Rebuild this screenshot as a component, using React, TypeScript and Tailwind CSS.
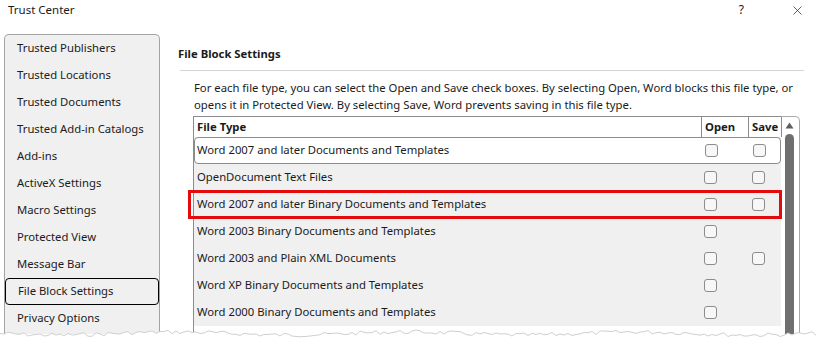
import { X } from "lucide-react";

const NAV_ITEMS = [
  "Trusted Publishers",
  "Trusted Locations",
  "Trusted Documents",
  "Trusted Add-in Catalogs",
  "Add-ins",
  "ActiveX Settings",
  "Macro Settings",
  "Protected View",
  "Message Bar",
  "File Block Settings",
  "Privacy Options",
];

type FileRow = { name: string; save: boolean };

const FILE_ROWS: FileRow[] = [
  { name: "Word 2007 and later Documents and Templates", save: true },
  { name: "OpenDocument Text Files", save: true },
  { name: "Word 2007 and later Binary Documents and Templates", save: true },
  { name: "Word 2003 Binary Documents and Templates", save: false },
  { name: "Word 2003 and Plain XML Documents", save: true },
  { name: "Word XP Binary Documents and Templates", save: false },
  { name: "Word 2000 Binary Documents and Templates", save: false },
];

const Checkbox = () => (
  <span className="block h-[13px] w-[13px] rounded-[3px] border border-[#8c8c8c] bg-[#f7f7f7]" />
);

// torn paper edge along the bottom of the screenshot
const tornEdge = () => {
  let seed = 7;
  const rand = () => {
    seed = (seed * 9301 + 49297) % 233280;
    return seed / 233280;
  };
  const pts: string[] = ["0,20"];
  for (let x = 0; x <= 816; x += 4) {
    const y = 6 + rand() * 4 + Math.sin(x / 37) * 1.5;
    pts.push(`${x},${y.toFixed(1)}`);
  }
  pts.push("816,20");
  return pts.join(" ");
};

export default function App() {
  const edge = tornEdge();

  return (
    <div className="relative h-[338px] w-[816px] overflow-hidden bg-white font-['Noto_Sans',sans-serif] text-[11.3px] text-[#1b1b1b]">
      <div className="flex h-[34px] items-start pt-[2px]">
        <span className="pl-[8px] text-[11.5px] leading-[16px]">Trust Center</span>
        <span className="ml-auto mr-[46px] text-[12px] leading-[16px]">?</span>
        <X className="mr-[11px] mt-[1px] h-[15px] w-[15px]" strokeWidth={1.1} />
      </div>

      <div className="flex">
        <div className="ml-[4px] h-[300px] w-[156px] shrink-0 whitespace-nowrap rounded-t-[5px] border border-b-0 border-[#a3a3a3] bg-[#f0f0f0]">
          {NAV_ITEMS.map((item) => (
            <div
              key={item}
              className={`flex h-[27px] items-center pl-[12px] ${
                item === "File Block Settings"
                  ? "rounded-[4px] border border-black pl-[11px]"
                  : ""
              }`}
            >
              {item}
            </div>
          ))}
        </div>

        <div className="ml-[18px] flex-1 pt-[10px]">
          <h2 className="h-[20px] font-bold leading-[20px]">File Block Settings</h2>
          <div className="ml-[2px] mr-[12px] mt-[6px] h-px bg-[#d4d4d4]" />
          <p className="mt-[8px] whitespace-nowrap pl-[16px] leading-[17px]">
            For each file type, you can select the Open and Save check boxes. By selecting Open, Word blocks this file type, or
            <br />
            opens it in Protected View. By selecting Save, Word prevents saving in this file type.
          </p>

          <div className="ml-[15px] mt-[3px] flex w-[607px]">
            <div className="w-[588px] border-l border-[#8c8c8c]">
              <div className="grid h-[21px] grid-cols-[507px_47px_34px] border-t border-[#8c8c8c] bg-white font-bold">
                <div className="flex items-center pl-[3px]">File Type</div>
                <div className="flex items-center border-l border-[#8c8c8c] pl-[3px]">Open</div>
                <div className="flex items-center border-x border-[#8c8c8c] pl-[3px]">Save</div>
              </div>
              <div className="bg-[#f0f0f0]">
                {FILE_ROWS.map((row, i) => (
                  <div
                    key={row.name}
                    className={`relative grid h-[27px] grid-cols-[507px_47px_34px] items-center ${
                      i === 0 ? "rounded-[4px] border border-[#8c8c8c] bg-white" : ""
                    }`}
                  >
                    <div className={i === 0 ? "pl-[2px]" : "pl-[3px]"}>{row.name}</div>
                    <div className="pl-[3px]">
                      <Checkbox />
                    </div>
                    <div className="pl-[4px]">{row.save ? <Checkbox /> : null}</div>
                    {i === 2 ? (
                      <span className="pointer-events-none absolute -left-[6px] -right-[1px] -top-[1px] -bottom-[1px] border-[3px] border-[#e30b0b]" />
                    ) : null}
                  </div>
                ))}
              </div>
            </div>

            <div className="flex w-[19px] flex-col items-center rounded-tr-[5px] border-r border-t border-[#a9a9a9] pt-[5px]">
              <svg width="9" height="7" viewBox="0 0 9 7" className="ml-[-1px]">
                <path d="M4.5 0.5 L8.5 6.5 L0.5 6.5 Z" fill="#5f5f5f" />
              </svg>
              <div className="ml-[-2px] mt-[5px] h-[200px] w-[9px] rounded-t-[5px] bg-[#6f6f6f]" />
            </div>
          </div>
        </div>
      </div>

      <svg
        className="pointer-events-none absolute bottom-0 left-0"
        width="816"
        height="14"
        viewBox="0 0 816 14"
      >
        <polygon points={edge} fill="#cfcfcf" transform="translate(0,1)" />
        <polygon points={edge} fill="#ffffff" transform="translate(0,2)" />
      </svg>
    </div>
  );
}
